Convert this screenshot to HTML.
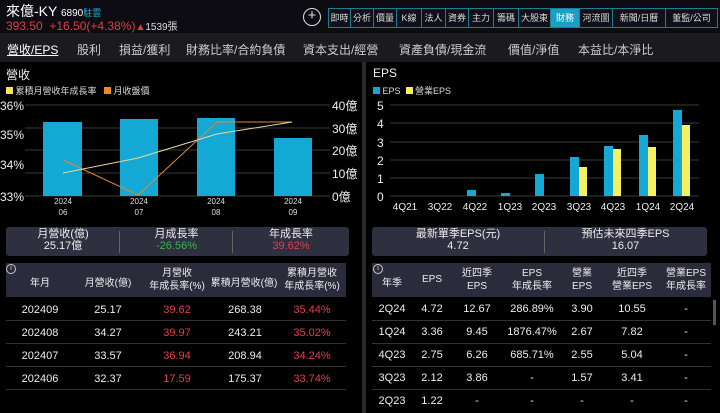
<!DOCTYPE html>
<html><head><meta charset="utf-8"><style>
*{margin:0;padding:0;box-sizing:border-box}
body{width:720px;height:413px;background:#000;color:#ddd;font-family:"Liberation Sans","Noto Sans CJK TC",sans-serif;position:relative;overflow:hidden}
.a{position:absolute;white-space:nowrap}
.hdr{position:absolute;left:0;top:0;width:720px;height:33px;background:#0c0c12}
.btn{position:absolute;top:8px;height:20px;border:1px solid #1a7f95;color:#ddd;font-size:9px;line-height:18px;text-align:center;background:#101018}
.tabs{position:absolute;left:0;top:33px;width:720px;height:29px;background:#1b1b1f}
.tab{position:absolute;top:41px;font-size:12px;color:#ccc}
.box{position:absolute;background:#2e2f3f;border-radius:3px}
.th{position:absolute;background:#2a2b3b}
.c{position:absolute;text-align:center;font-size:11px;color:#eee}
.r{color:#e0404a}
.line{position:absolute;height:1px;background:#333}
</style></head><body>
<div class="hdr"></div>
<div class="a" style="left:6px;top:1px;font-size:14px;color:#fff">來億-KY <span style="font-size:10px">6890</span><span style="font-size:9px;color:#2bb0d8">駐雲</span></div>
<div class="a" style="left:6px;top:18px;font-size:12px;color:#e03d45">393.50 &nbsp;+16.50(+4.38%)<span style="font-size:10px">▲</span><span style="font-size:10px;color:#ddd">1539張</span></div>
<div class="a" style="left:303px;top:8px;width:18px;height:18px;border:1.5px solid #ddd;border-radius:50%;color:#ddd;font-size:15px;line-height:14px;text-align:center">+</div>
<div class="btn" style="left:328px;width:23px">即時</div>
<div class="btn" style="left:350px;width:24px">分析</div>
<div class="btn" style="left:373px;width:24px">價量</div>
<div class="btn" style="left:396px;width:26px">K線</div>
<div class="btn" style="left:421px;width:25px">法人</div>
<div class="btn" style="left:445px;width:24px">資券</div>
<div class="btn" style="left:468px;width:26px">主力</div>
<div class="btn" style="left:493px;width:26px">籌碼</div>
<div class="btn" style="left:518px;width:33px">大股東</div>
<div class="btn" style="left:550px;width:30px;background:#1b9fc4;color:#fff">財務</div>
<div class="btn" style="left:579px;width:34px">河流圖</div>
<div class="btn" style="left:612px;width:54px">新聞/日曆</div>
<div class="btn" style="left:665px;width:53px">董監/公司</div>
<div class="tabs"></div>
<div class="tab" style="left:7px;color:#fff;text-decoration:underline">營收/EPS</div>
<div class="tab" style="left:77px">股利</div>
<div class="tab" style="left:119px">損益/獲利</div>
<div class="tab" style="left:186px">財務比率/合約負債</div>
<div class="tab" style="left:303px">資本支出/經營</div>
<div class="tab" style="left:399px">資產負債/現金流</div>
<div class="tab" style="left:508px">價值/淨值</div>
<div class="tab" style="left:578px">本益比/本淨比</div>
<div class="a" style="left:362px;top:62px;width:4px;height:351px;background:#2a2a2e"></div>

<div class="a" style="left:6px;top:66px;font-size:12px;color:#eee">營收</div>
<div class="a" style="left:6px;top:84px;font-size:9px;color:#ddd"><span style="display:inline-block;width:7px;height:7px;background:#f4e65a"></span> 累積月營收年成長率 &nbsp; <span style="display:inline-block;width:7px;height:7px;background:#f08a1c"></span> 月收盤價</div>
<svg class="a" style="left:0;top:95px" width="360" height="125">
<g stroke="#3a3a3a" stroke-width="1"><line x1="25" y1="10" x2="330" y2="10"/><line x1="25" y1="33" x2="330" y2="33"/><line x1="25" y1="55" x2="330" y2="55"/><line x1="25" y1="78" x2="330" y2="78"/><line x1="25" y1="101" x2="330" y2="101"/></g>
<g fill="#14a8d4"><rect x="43" y="27" width="39" height="74"/><rect x="120" y="24" width="38" height="77"/><rect x="197" y="23" width="38" height="78"/><rect x="274" y="43" width="38" height="58"/></g>
<polyline points="63,65 138,100 217,27 292,27" fill="none" stroke="#d98a3c" stroke-width="1"/>
<polyline points="63,78 138,63 217,39 292,27" fill="none" stroke="#e8d9a0" stroke-width="1"/>
<g fill="#eee" font-size="12"><text x="0" y="15">36%</text><text x="0" y="44">35%</text><text x="0" y="74">34%</text><text x="0" y="106">33%</text>
<text x="332" y="15">40億</text><text x="332" y="38">30億</text><text x="332" y="60">20億</text><text x="332" y="83">10億</text><text x="332" y="106">0億</text></g>
<g fill="#ddd" font-size="8" text-anchor="middle"><text x="63" y="109">2024</text><text x="63" y="120">06</text><text x="139" y="109">2024</text><text x="139" y="120">07</text><text x="216" y="109">2024</text><text x="216" y="120">08</text><text x="293" y="109">2024</text><text x="293" y="120">09</text></g>
</svg>
<div class="box" style="left:6px;top:227px;width:343px;height:29px"></div>
<div class="c" style="left:6px;top:228px;width:114px;line-height:12px">月營收(億)<br>25.17億</div>
<div class="c" style="left:120px;top:228px;width:113px;line-height:12px">月成長率<br><span style="color:#3cb44a">-26.56%</span></div>
<div class="c" style="left:233px;top:228px;width:116px;line-height:12px">年成長率<br><span class="r">39.62%</span></div>
<div class="a" style="left:119px;top:231px;width:1px;height:22px;background:#666"></div>
<div class="a" style="left:232px;top:231px;width:1px;height:22px;background:#666"></div>

<div class="th" style="left:6px;top:263px;width:340px;height:34px"></div>
<div class="a" style="left:6px;top:264px;width:10px;height:10px;border:1px solid #ccc;border-radius:50%;font-size:7px;text-align:center;line-height:8px">i</div>
<div class="c" style="left:6px;top:274px;width:68px;font-size:10px">年月</div>
<div class="c" style="left:74px;top:274px;width:68px;font-size:10px">月營收(億)</div>
<div class="c" style="left:142px;top:267px;width:70px;font-size:10px;line-height:13px">月營收<br>年成長率(%)</div>
<div class="c" style="left:210px;top:274px;width:68px;font-size:10px">累積月營收(億)</div>
<div class="c" style="left:278px;top:267px;width:68px;font-size:10px;line-height:13px">累積月營收<br>年成長率(%)</div>
<div class="line" style="left:6px;top:320px;width:340px"></div><div class="line" style="left:6px;top:343px;width:340px"></div><div class="line" style="left:6px;top:366px;width:340px"></div><div class="line" style="left:6px;top:389px;width:340px"></div>
<div class="a" style="left:6px;top:299px;width:340px;font-size:11px;color:#eee;line-height:23px">
<div style="display:flex"><span style="width:68px;text-align:center">202409</span><span style="width:68px;text-align:center">25.17</span><span class="r" style="width:70px;text-align:center">39.62</span><span style="width:66px;text-align:center">268.38</span><span class="r" style="width:68px;text-align:center">35.44%</span></div>
<div style="display:flex"><span style="width:68px;text-align:center">202408</span><span style="width:68px;text-align:center">34.27</span><span class="r" style="width:70px;text-align:center">39.97</span><span style="width:66px;text-align:center">243.21</span><span class="r" style="width:68px;text-align:center">35.02%</span></div>
<div style="display:flex"><span style="width:68px;text-align:center">202407</span><span style="width:68px;text-align:center">33.57</span><span class="r" style="width:70px;text-align:center">36.94</span><span style="width:66px;text-align:center">208.94</span><span class="r" style="width:68px;text-align:center">34.24%</span></div>
<div style="display:flex"><span style="width:68px;text-align:center">202406</span><span style="width:68px;text-align:center">32.37</span><span class="r" style="width:70px;text-align:center">17.59</span><span style="width:66px;text-align:center">175.37</span><span class="r" style="width:68px;text-align:center">33.74%</span></div>
</div>

<div class="a" style="left:373px;top:66px;font-size:12px;color:#eee">EPS</div>
<div class="a" style="left:373px;top:84px;font-size:9px;color:#ddd"><span style="display:inline-block;width:7px;height:7px;background:#14a8d4"></span> EPS &nbsp;<span style="display:inline-block;width:7px;height:7px;background:#f6f060"></span> 營業EPS</div>
<svg class="a" style="left:366px;top:95px" width="354" height="120">
<g stroke="#3a3a3a"><line x1="24" y1="10" x2="333" y2="10"/><line x1="24" y1="28" x2="333" y2="28"/><line x1="24" y1="47" x2="333" y2="47"/><line x1="24" y1="65" x2="333" y2="65"/><line x1="24" y1="83" x2="333" y2="83"/><line x1="24" y1="101" x2="333" y2="101"/></g>
<g fill="#eee" font-size="12"><text x="11" y="15">5</text><text x="11" y="33">4</text><text x="11" y="52">3</text><text x="11" y="70">2</text><text x="11" y="88">1</text><text x="11" y="106">0</text></g>
<g fill="#14a8d4"><rect x="101" y="95" width="9" height="6"/><rect x="135" y="98" width="9" height="3"/><rect x="169" y="79" width="9" height="22"/><rect x="204" y="62" width="9" height="39"/><rect x="238" y="51" width="9" height="50"/><rect x="273" y="40" width="9" height="61"/><rect x="307" y="15" width="9" height="86"/></g>
<g fill="#f6f060"><rect x="213" y="72" width="8" height="29"/><rect x="247" y="54" width="8" height="47"/><rect x="282" y="52" width="8" height="49"/><rect x="316" y="30" width="8" height="71"/></g>
<g fill="#eee" font-size="10" text-anchor="middle"><text x="39" y="115">4Q21</text><text x="74" y="115">3Q22</text><text x="109" y="115">4Q22</text><text x="144" y="115">1Q23</text><text x="178" y="115">2Q23</text><text x="213" y="115">3Q23</text><text x="247" y="115">4Q23</text><text x="282" y="115">1Q24</text><text x="316" y="115">2Q24</text></g>
</svg>
<div class="box" style="left:372px;top:227px;width:335px;height:29px"></div>
<div class="c" style="left:372px;top:228px;width:172px;line-height:12px">最新單季EPS(元)<br>4.72</div>
<div class="c" style="left:544px;top:228px;width:163px;line-height:12px">預估未來四季EPS<br>16.07</div>
<div class="a" style="left:544px;top:231px;width:1px;height:22px;background:#666"></div>

<div class="th" style="left:372px;top:263px;width:339px;height:34px"></div>
<div class="a" style="left:373px;top:264px;width:10px;height:10px;border:1px solid #ccc;border-radius:50%;font-size:7px;text-align:center;line-height:8px">i</div>
<div class="c" style="left:372px;top:274px;width:40px;font-size:10px">年季</div>
<div class="c" style="left:412px;top:274px;width:40px;font-size:10px">EPS</div>
<div class="c" style="left:452px;top:267px;width:50px;font-size:10px;line-height:13px">近四季<br>EPS</div>
<div class="c" style="left:502px;top:267px;width:60px;font-size:10px;line-height:13px">EPS<br>年成長率</div>
<div class="c" style="left:562px;top:267px;width:40px;font-size:10px;line-height:13px">營業<br>EPS</div>
<div class="c" style="left:602px;top:267px;width:60px;font-size:10px;line-height:13px">近四季<br>營業EPS</div>
<div class="c" style="left:662px;top:267px;width:48px;font-size:10px;line-height:13px">營業EPS<br>年成長率</div>
<div class="line" style="left:372px;top:320px;width:339px"></div><div class="line" style="left:372px;top:343px;width:339px"></div><div class="line" style="left:372px;top:366px;width:339px"></div><div class="line" style="left:372px;top:389px;width:339px"></div>
<div class="a" style="left:713px;top:300px;width:3px;height:25px;background:#555"></div>
<div class="a" style="left:372px;top:298px;width:339px;font-size:11px;color:#eee;line-height:23px">
<div style="display:flex"><span style="width:40px;text-align:center">2Q24</span><span style="width:40px;text-align:center">4.72</span><span style="width:50px;text-align:center">12.67</span><span style="width:60px;text-align:center">286.89%</span><span style="width:40px;text-align:center">3.90</span><span style="width:60px;text-align:center">10.55</span><span style="width:48px;text-align:center">-</span></div>
<div style="display:flex"><span style="width:40px;text-align:center">1Q24</span><span style="width:40px;text-align:center">3.36</span><span style="width:50px;text-align:center">9.45</span><span style="width:60px;text-align:center">1876.47%</span><span style="width:40px;text-align:center">2.67</span><span style="width:60px;text-align:center">7.82</span><span style="width:48px;text-align:center">-</span></div>
<div style="display:flex"><span style="width:40px;text-align:center">4Q23</span><span style="width:40px;text-align:center">2.75</span><span style="width:50px;text-align:center">6.26</span><span style="width:60px;text-align:center">685.71%</span><span style="width:40px;text-align:center">2.55</span><span style="width:60px;text-align:center">5.04</span><span style="width:48px;text-align:center">-</span></div>
<div style="display:flex"><span style="width:40px;text-align:center">3Q23</span><span style="width:40px;text-align:center">2.12</span><span style="width:50px;text-align:center">3.86</span><span style="width:60px;text-align:center">-</span><span style="width:40px;text-align:center">1.57</span><span style="width:60px;text-align:center">3.41</span><span style="width:48px;text-align:center">-</span></div>
<div style="display:flex"><span style="width:40px;text-align:center">2Q23</span><span style="width:40px;text-align:center">1.22</span><span style="width:50px;text-align:center">-</span><span style="width:60px;text-align:center">-</span><span style="width:40px;text-align:center">-</span><span style="width:60px;text-align:center">-</span><span style="width:48px;text-align:center">-</span></div>
</div>
</body></html>
